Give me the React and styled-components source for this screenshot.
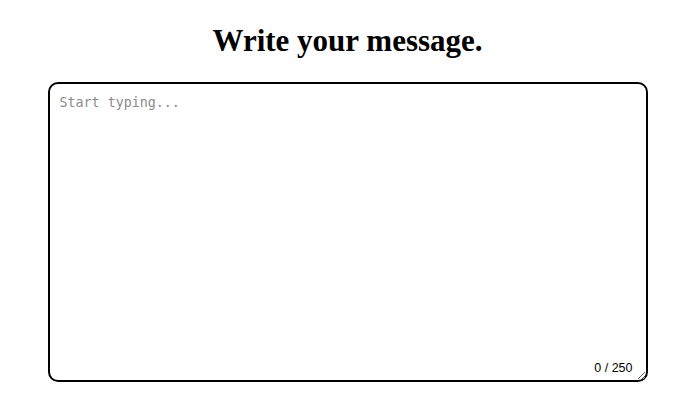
import React, { useState } from "react";
import styled, { createGlobalStyle } from "styled-components";

const Global = createGlobalStyle`
  html, body { margin: 0; padding: 0; background: #ffffff; }
  body { font-family: "Liberation Serif", "Times New Roman", serif; }
`;

const Page = styled.main`
  display: flex;
  flex-direction: column;
  align-items: center;
  padding: 23px 0 0 6px;
`;

const Title = styled.h1`
  margin: 0 0 23px;
  font-family: "Liberation Serif", "Times New Roman", serif;
  font-size: 31px;
  font-weight: bold;
  line-height: 36px;
  color: #000;
`;

const Field = styled.div`
  position: relative;
  width: 600px;
`;

const Area = styled.textarea`
  display: block;
  box-sizing: border-box;
  width: 600px;
  height: 300px;
  margin: 0;
  padding: 11px 10px 10px;
  border: 2px solid #000;
  border-radius: 10px;
  background: #fff;
  font-family: "DejaVu Sans Mono", monospace;
  font-size: 13.333px;
  color: #000;
  outline: none;
  &::placeholder { color: #8a8a8a; }
`;

const Counter = styled.span`
  position: absolute;
  right: 15px;
  bottom: 8px;
  font-family: "Liberation Sans", Arial, sans-serif;
  font-size: 12.5px;
  line-height: 1;
  color: #000;
  pointer-events: none;
`;

export default function App() {
  const [text, setText] = useState("");
  const max = 250;
  return (
    <>
      <Global />
      <Page>
        <Title>Write your message.</Title>
        <Field>
          <Area
            placeholder="Start typing..."
            maxLength={max}
            value={text}
            onChange={(e) => setText(e.target.value)}
          />
          <Counter>{text.length} / {max}</Counter>
        </Field>
      </Page>
    </>
  );
}
